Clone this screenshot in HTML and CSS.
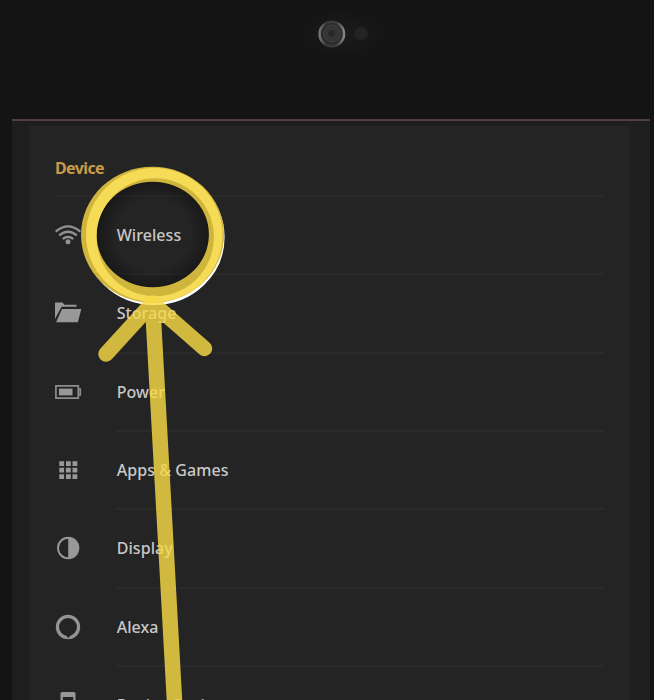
FILE: index.html
```html
<!DOCTYPE html>
<html lang="en">
<head>
<meta charset="utf-8">
<title>Settings</title>
<link rel="stylesheet" href="styles.css">
</head>
<body>
<div class="tablet">
  <div class="bezel">
    <svg class="camera" width="100" height="60" viewBox="290 4 100 60">
      <defs>
        <radialGradient id="halo"><stop offset="0" stop-color="#1b1b1b"/><stop offset="1" stop-color="#141414"/></radialGradient>
        <linearGradient id="rim"><stop offset="0" stop-color="#747474"/><stop offset=".25" stop-color="#3b3b3b"/><stop offset=".7" stop-color="#3b3b3b"/><stop offset="1" stop-color="#858585"/></linearGradient>
      </defs>
      <ellipse cx="342" cy="34" rx="45" ry="25" fill="url(#halo)"/>
      <g class="lens">
        <circle cx="331.8" cy="34" r="12.2" fill="#2b2b2b" stroke="url(#rim)" stroke-width="2.6"/>
        <circle cx="332" cy="33.5" r="8.5" fill="#353535" stroke="#404040"/>
        <circle cx="331.5" cy="33.5" r="3.2" fill="#272727"/>
        <circle cx="361" cy="33.5" r="6.8" fill="#232323"/>
      </g>
    </svg>
  </div>
  <main class="screen">
    <section class="panel">
      <h1 class="heading">Device</h1>
      <ul class="list">
        <li class="row first"><svg class="icon" viewBox="0 0 28 28"><g fill="none" stroke="#929292" stroke-width="2.3"><path d="M1.7 10.6Q14 .2 26.3 10.6M5.2 14.4Q14 7 22.8 14.4M8.8 18Q14 13.8 19.2 18"/></g><circle cx="14" cy="20.8" r="2.5" fill="#929292"/></svg><span class="label">Wireless</span></li>
        <li class="row"><svg class="icon" viewBox="0 0 28 28"><path fill="#989898" d="M1 3.5h7.5l2 2.2H22.5v2.1H7.6L1 20zM8 10h19.3l-3.4 13.2H2z"/></svg><span class="label">Storage</span></li>
        <li class="row"><svg class="icon" viewBox="0 0 28 28"><path fill="none" stroke="#8c8c8c" stroke-width="1.7" d="M1.9 7.9H24.3v12.2H1.9zM24.3 11h2v6h-2z"/><path fill="#989898" d="M5 10.6h13.5v6.8H5z"/></svg><span class="label">Power</span></li>
        <li class="row"><svg class="icon" viewBox="0 0 28 28"><path fill="#989898" d="M5.3 5.2h4.8v4.8H5.3zm6.7 0h4.8v4.8H12zm6.5 0h4.8v4.8h-4.8zM5.3 11.7h4.8v4.8H5.3zm6.7 0h4.8v4.8H12zm6.5 0h4.8v4.8h-4.8zM5.3 18.2h4.8V23H5.3zm6.7 0h4.8V23H12zm6.5 0h4.8V23h-4.8z"/></svg><span class="label">Apps &amp; Games</span></li>
        <li class="row"><svg class="icon" viewBox="0 0 28 28"><circle cx="14.2" cy="14" r="10.2" fill="none" stroke="#989898" stroke-width="1.9"/><path fill="#989898" d="M14.2 4a10 10 0 0 1 0 20z"/></svg><span class="label">Display</span></li>
        <li class="row"><svg class="icon" viewBox="0 0 28 28"><circle cx="14" cy="14" r="10.6" fill="none" stroke="#949494" stroke-width="3.2"/><path fill="#242424" d="M12 21.8h5l-2.8 3.4z"/></svg><span class="label">Alexa</span></li>
        <li class="row"><svg class="icon" viewBox="0 0 28 28"><path fill="#989898" d="M6.5 2.5q0-1.5 1.5-1.5h12q1.5 0 1.5 1.5v22q0 2-2 2h-11q-2 0-2-2zm2.4 3.4v16h10.4v-16z"/></svg><span class="label">Device Options</span></li>
      </ul>
    </section>
  </main>
  <svg class="callout" width="654" height="700" viewBox="0 0 654 700">
    <defs><radialGradient id="shade"><stop offset=".65" stop-color="#000" stop-opacity="0"/><stop offset="1" stop-color="#000" stop-opacity=".35"/></radialGradient></defs>
    <ellipse cx="153" cy="234.5" rx="57" ry="54" fill="url(#shade)"/>
    <ellipse cx="154" cy="237.3" rx="67.6" ry="64.6" fill="none" stroke="#fff" stroke-width="6"/>
    <path fill="#cfb53c" fill-rule="evenodd" d="M81 234.7a71.5 68 0 1 0 143 0a71.5 68 0 1 0-143 0zM96.5 234.5a56.2 52.7 0 1 0 112.4 0a56.2 52.7 0 1 0-112.4 0z"/>
    <path fill="#f6db57" fill-rule="evenodd" d="M86 235a68.3 67 0 1 0 136.6 0a68.3 67 0 1 0-136.6 0zM96.5 237.2a58.7 59 0 1 0 117.4 0a58.7 59 0 1 0-117.4 0z"/>
    <path class="arrow" d="M106 354L152.5 303L204.5 348.5M152.5 303L175 710"/>
  </svg>
</div>
</body>
</html>
```

FILE: styles.css
```css
* { box-sizing: border-box; }
body { margin: 0; background: #141414; }
.tablet { position: relative; height: 700px; overflow: hidden; background: #141414; font-family: "Noto Sans", "Open Sans", sans-serif; }
.bezel { height: 119px; padding-top: 4px; display: flex; }
.camera { margin-left: 290px; flex: none; }
.lens { filter: blur(.6px); }
.screen { height: 581px; margin: 0 4px 0 11.5px; padding: 5px 20px 0 17.5px; background: #1e1e1e; border-top: 2px solid #513e40; }
.panel { height: 580px; background: #242424; padding: 32px 26px 0; }
.heading { margin: 0; height: 37px; font-size: 16px; line-height: 20px; font-weight: 700; letter-spacing: -.6px; color: #c99b49; }
.list { list-style: none; margin: 0; padding: 0; }
.row { display: flex; align-items: center; height: 78.35px; padding-top: 1.5px; position: relative; }
.row::before { content: ""; position: absolute; top: 0; left: 61px; right: 0; height: 2px; background: #2a2a2a; }
.row.first::before { left: 0; }
.icon { width: 28px; height: 28px; margin-left: -1px; flex: none; }
.label { margin-left: 34.7px; font-size: 16px; line-height: 24px; font-weight: 500; letter-spacing: .06px; color: #c8c8c8; white-space: nowrap; }
.callout { position: absolute; inset: 0; }
.arrow { fill: none; stroke: #f8d945; stroke-opacity: .82; stroke-width: 15.5; stroke-linecap: round; stroke-linejoin: round; }
```
